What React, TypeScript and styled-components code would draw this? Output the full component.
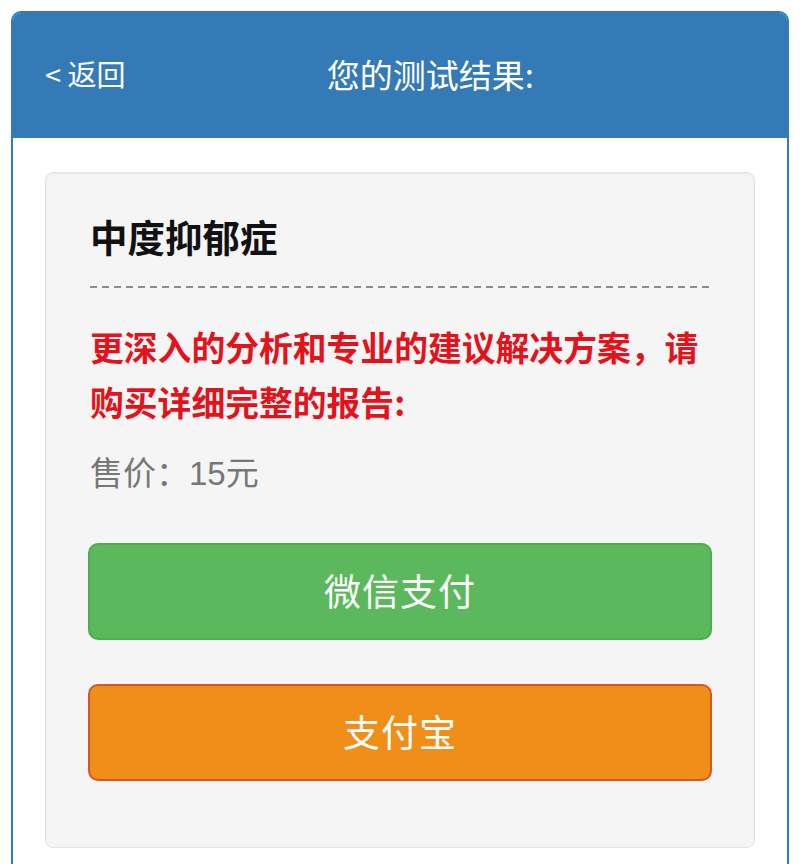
import React from "react";
import styled, { createGlobalStyle } from "styled-components";

const GlobalStyle = createGlobalStyle`
  html, body {
    margin: 0;
    padding: 0;
    background: #ffffff;
  }
  body {
    font-family: "Liberation Sans", "Noto Sans CJK SC", sans-serif;
  }
  * { box-sizing: border-box; }
`;

const Page = styled.div`
  padding: 11px 11px 0 11px;
  height: 864px;
  overflow: hidden;
`;

const Panel = styled.div`
  border: 2px solid #337ab7;
  border-bottom: none;
  border-radius: 10px 10px 0 0;
  overflow: hidden;
  min-height: 900px;
`;

const Header = styled.header`
  background: #337ab7;
  height: 125px;
  display: grid;
  grid-template-columns: auto 1fr;
  align-items: center;
  padding: 0 52px 0 32px;
  color: #ffffff;
`;

const Back = styled.a`
  font-size: 29px;
  line-height: 1;
  color: #ffffff;
  text-decoration: none;
  font-weight: 400;
  padding-bottom: 4px;
  font-family: "Noto Sans CJK SC", sans-serif;
`;

const Title = styled.h1`
  margin: 0;
  font-size: 33px;
  font-weight: 400;
  text-align: center;
  line-height: 1;
  padding-bottom: 2px;
  font-family: "Noto Sans CJK SC", sans-serif;
`;

const Body = styled.main`
  background: #ffffff;
  padding: 34px 32px 0 32px;
`;

const Well = styled.section`
  background: #f5f5f5;
  border: 1px solid #e3e3e3;
  border-radius: 8px;
  box-shadow: inset 0 1px 2px rgba(0, 0, 0, 0.05);
  padding: 41px 42px 66px 42px;
`;

const ResultTitle = styled.h2`
  margin: 0 2px;
  font-size: 37.5px;
  line-height: 44px;
  font-weight: 700;
  color: #111111;
  font-family: "Noto Sans CJK SC", sans-serif;
`;

const Divider = styled.div`
  margin: 28px 0 0 2px;
  height: 2px;
  background: repeating-linear-gradient(
    to right,
    #8c8c8c 0 7px,
    transparent 7px 12px
  );
`;

const Notice = styled.p`
  margin: 31px 0 0 2px;
  font-size: 33.8px;
  line-height: 55px;
  font-weight: 700;
  color: #e4121b;
  font-family: "Noto Sans CJK SC", sans-serif;
`;

const Price = styled.p`
  margin: 23px 0 0 2px;
  font-size: 33px;
  line-height: 44px;
  color: #777777;
  font-weight: 400;
`;

const Buttons = styled.div`
  margin-top: 47px;
  display: flex;
  flex-direction: column;
  gap: 44px;
`;

const PayButton = styled.button<{ $bg: string; $border: string }>`
  height: 97px;
  width: 100%;
  border-radius: 10px;
  border: 2px solid ${(p) => p.$border};
  background: ${(p) => p.$bg};
  color: #ffffff;
  font-family: "Noto Sans CJK SC", "Noto Sans", sans-serif;
  font-size: 37px;
  font-weight: 400;
  letter-spacing: 1px;
  cursor: pointer;
  display: flex;
  align-items: center;
  justify-content: center;
  padding: 0 0 4px 0;
`;

export default function App() {
  return (
    <>
      <GlobalStyle />
      <Page>
        <Panel>
          <Header>
            <Back href="#">&lt; 返回</Back>
            <Title>您的测试结果:</Title>
          </Header>
          <Body>
            <Well>
              <ResultTitle>中度抑郁症</ResultTitle>
              <Divider />
              <Notice>更深入的分析和专业的建议解决方案，请购买详细完整的报告:</Notice>
              <Price>售价：15元</Price>
              <Buttons>
                <PayButton $bg="#5cb85c" $border="#4cae4c">微信支付</PayButton>
                <PayButton $bg="#f08e1a" $border="#d4562c">支付宝</PayButton>
              </Buttons>
            </Well>
          </Body>
        </Panel>
      </Page>
    </>
  );
}
